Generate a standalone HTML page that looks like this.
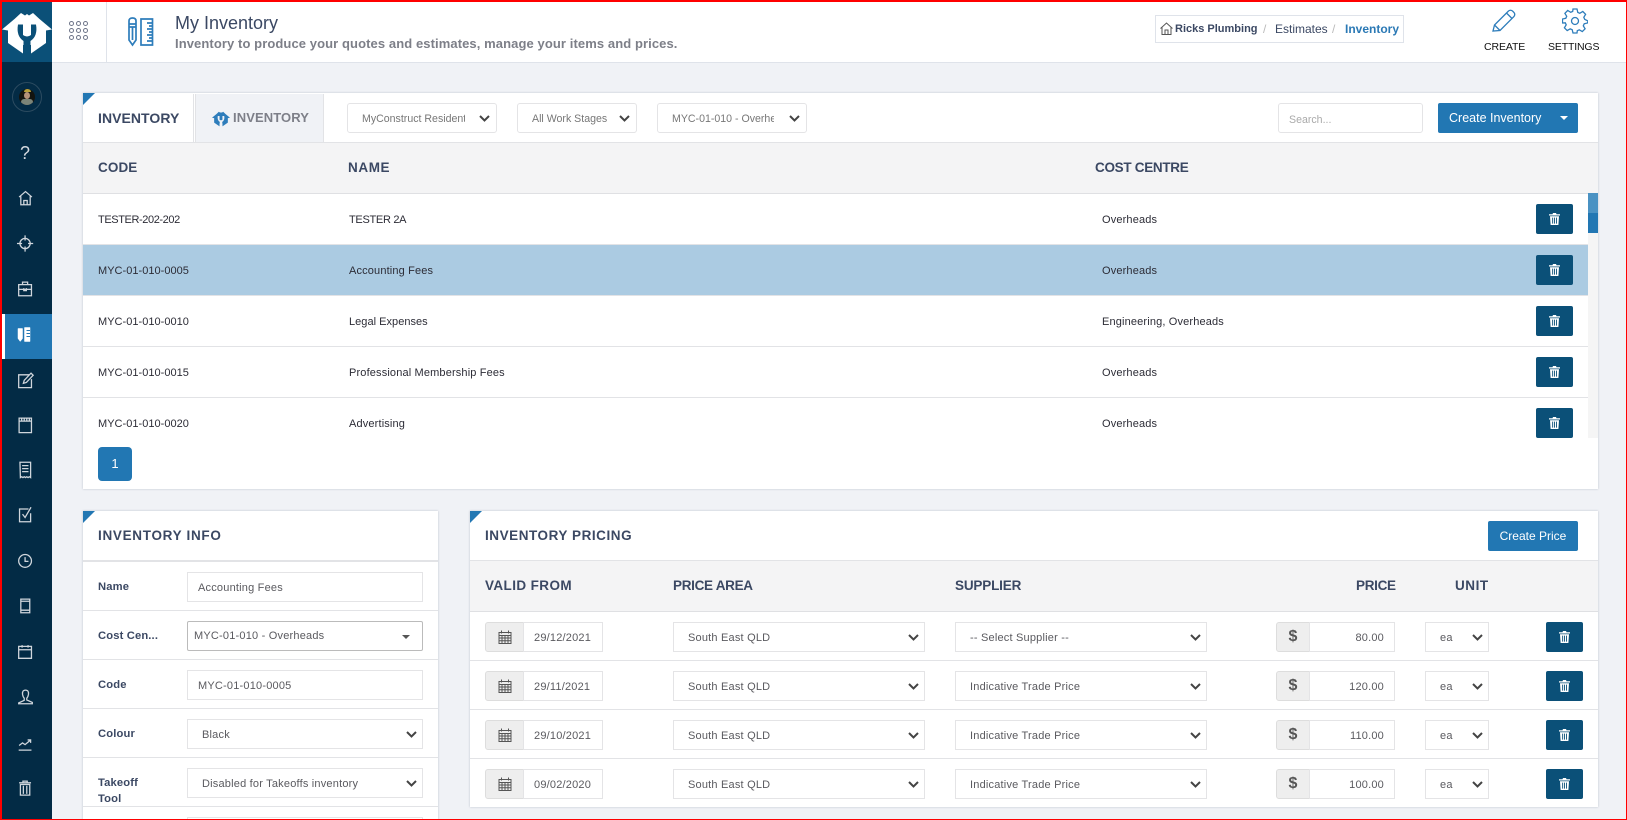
<!DOCTYPE html>
<html lang="en"><head><meta charset="utf-8"><title>My Inventory</title>
<style>
*{box-sizing:border-box}
html{margin:0;padding:0;width:1627px;height:820px;overflow:hidden}
body{margin:0;padding:0;width:1627px;height:820px;overflow:hidden;position:relative;background:#f0f2f6;font-family:"Liberation Sans",sans-serif;color:#333}
.a{position:absolute}
.t{position:absolute;white-space:nowrap;line-height:16px}
.h{font-weight:700;font-size:13.5px;color:#3b4863;letter-spacing:.3px}
.r{font-size:11px;color:#2c2c36;letter-spacing:.15px}
.l{font-size:11.2px;font-weight:700;color:#3b4863;letter-spacing:.15px}
.card{position:absolute;background:#fff;box-shadow:0 0 2px rgba(120,130,150,.45)}
.corner{position:absolute;left:0;top:0;width:0;height:0;border-top:12px solid #2277b3;border-right:12px solid transparent}
.line{position:absolute;background:#e2e3e6;height:1px}
.del{position:absolute;width:37px;height:30px;background:#0b5078;border-radius:2px}
.del svg{position:absolute;left:13px;top:9px;width:11px;height:12px}
.box{position:absolute;height:30px;background:#fff;border:1px solid #e4e4e6;font-size:11px;color:#5a5a5f;line-height:31px;white-space:nowrap;overflow:hidden;letter-spacing:.2px}
.chev{position:absolute;right:5px;top:11px;width:11px;height:7px}
.add{position:absolute;height:30px;background:#eee;border:1px solid #ddd;border-radius:3px 0 0 3px;color:#555;text-align:center}
.dol{font-size:16px;font-weight:700;line-height:28px}
.ic{position:absolute;left:14px;width:23px;height:23px;margin-top:2px;fill:none;stroke:#d0d6dc;stroke-width:1.5}
.btn{position:absolute;background:#2277b3;color:#fff;height:30px;border-radius:2px;font-size:12px;line-height:30px;text-align:center}
</style></head><body>
<svg width="0" height="0" style="position:absolute">
<symbol id="trash" viewBox="0 0 11 12"><path fill="#fff" d="M4 0h3l.5 1.200H11v1.300H0V1.200h3.500zM1 3.200h9l-.6 8.800H1.600zM3.200 4.600v6h.9v-6zm1.900 0v6H6v-6zm1.900 0v6h.9v-6z" fill-rule="evenodd"/></symbol>
<symbol id="chev" viewBox="0 0 11 7"><path d="M1 1l4.500 4.500L10 1" fill="none" stroke="#444" stroke-width="2"/></symbol>
<symbol id="cal" viewBox="0 0 14 14"><path fill="none" stroke="#555" d="M1 2.500h12v11H1zM1 5.500h12M1 8h12M1 10.800h12M4 5.500v8M7 5.500v8M10 5.500v8M3.500 .5v3M10.500 .5v3"/></symbol>
</svg>

<!-- header -->
<div class="a" style="left:0;top:0;width:1627px;height:63px;background:#fff;border-bottom:1px solid #dfe3ea"></div>
<div class="a" style="left:2px;top:2px;width:50px;height:60px;background:#0b5078"></div>
<svg class="a" style="left:2px;top:8px" width="50" height="50" viewBox="0 0 50 50"><path fill="#fff" d="M0 21.500L12.500 11 19 5l4 2.500L25 6l2 1.500L31 5l6.500 6L50 21.500l-6 1V35L29 45.500V37h-8v8.500L6 35V22.500z"/><path fill="#0b5078" d="M16 16.500H21V27Q25 30 29 27V16.500H34Q36 28 28.500 33V46H21.500V33Q14 28 16 16.500Z"/></svg>
<div class="a" style="left:2px;top:62px;width:50px;height:758px;background:#032b45"></div>
<div class="a" style="left:106px;top:2px;width:1px;height:60px;background:#dfe3ea"></div>
<svg class="a" style="left:68px;top:20px" width="22" height="22" viewBox="0 0 22 22" fill="none" stroke="#6d7488"><circle cx="3.500" cy="3.500" r="2"/><circle cx="10.500" cy="3.500" r="2"/><circle cx="17.500" cy="3.500" r="2"/><circle cx="3.500" cy="10.500" r="2"/><circle cx="10.500" cy="10.500" r="2"/><circle cx="17.500" cy="10.500" r="2"/><circle cx="3.500" cy="17.500" r="2"/><circle cx="10.500" cy="17.500" r="2"/><circle cx="17.500" cy="17.500" r="2"/></svg>
<svg class="a" style="left:128px;top:17px" width="26" height="30" viewBox="0 0 26 30" fill="none" stroke="#2e7dbb" stroke-width="1.700"><path d="M1 4q0-3 3.500-3T8 4v19l-3.500 5L1 23zM1 7h7M1 10h7M4.500 10v13"/><path d="M13 2h11.500v26H13zM19 6h5M21 9h3M19 12h5M21 15h3M19 18h5M21 21h3M19 24h5"/></svg>
<div class="t" style="left:175px;top:12px;font-size:18px;line-height:22px;color:#3b4863">My Inventory</div>
<div class="t" style="left:175px;top:36px;font-size:13px;font-weight:700;color:#7d7f88;letter-spacing:.09px">Inventory to produce your quotes and estimates, manage your items and prices.</div>

<div class="a" style="left:1155px;top:15px;width:249px;height:28px;border:1px solid #dfe3ea;background:#fff"></div>
<svg class="a" style="left:1160px;top:22px" width="13" height="13" viewBox="0 0 13 13" fill="none" stroke="#555"><path d="M.5 6.500L6.500 1l6 5.500M2 5.500V12.500h9V5.500M5 12.500V8h3v4.500"/></svg>
<div class="t" style="left:1175px;top:21px;font-size:11px;font-weight:700;color:#3b4863">Ricks Plumbing</div>
<div class="t" style="left:1263px;top:21px;font-size:12px;color:#bbb">/</div>
<div class="t" style="left:1275px;top:21px;font-size:12px;color:#3b4863">Estimates</div>
<div class="t" style="left:1332px;top:21px;font-size:12px;color:#bbb">/</div>
<div class="t" style="left:1345px;top:21px;font-size:12px;font-weight:700;color:#2b79b5">Inventory</div>

<svg class="a" style="left:1492px;top:9px" width="24" height="23" viewBox="0 0 24 23" fill="none" stroke="#2e7dbb" stroke-width="1.300"><path d="M1 22l1.500-6L16.500 2q2-1.500 4 0l1.500 1.500q1.500 2 0 4L8 21.500zM2.500 16L8 21.500M14.500 4l5.500 5.500"/></svg>
<svg class="a" style="left:1562px;top:8px" width="26" height="26" viewBox="0 0 26 26" fill="none" stroke="#2e7dbb" stroke-width="1.300"><circle cx="13" cy="13" r="3.500"/><path d="M11 1h4l.8 3.400 2 .9 3-1.800 2.800 2.800-1.800 3 .9 2L26 13l-.5 2-3.300.8-.9 2 1.800 3-2.800 2.800-3-1.800-2 .9L15 25h-4l-.8-3.300-2-.9-3 1.800-2.800-2.800 1.800-3-.9-2L.5 15v-4l3.300-.7.9-2-1.800-3L5.700 2.500l3 1.800 2-.9z"/></svg>
<div class="t" style="left:1484px;top:39px;font-size:10.500px;color:#111;letter-spacing:-.1px">CREATE</div>
<div class="t" style="left:1548px;top:39px;font-size:10.500px;color:#111;letter-spacing:-.15px">SETTINGS</div>

<!-- sidebar -->
<div class="a" style="left:12px;top:82px;width:30px;height:30px;border-radius:50%;border:1px solid #2c4b60"></div>
<div class="a" style="left:19px;top:89px;width:16px;height:16px;border-radius:50%;background:#14140f;overflow:hidden"><div class="a" style="left:5px;top:0;width:7px;height:3px;background:#b9a03a;border-radius:3px 3px 0 0"></div><div class="a" style="left:5px;top:3px;width:6px;height:7px;background:#b5927a;border-radius:50%"></div><div class="a" style="left:2px;top:10px;width:12px;height:6px;background:#7b8478;border-radius:3px"></div></div>
<div class="a" style="left:2px;top:314px;width:50px;height:45px;background:#2277b3"></div>
<div class="a" style="left:2px;top:314px;width:3px;height:45px;background:#fff"></div>
<div class="t" style="left:20px;top:143px;font-size:18px;line-height:20px;color:#d5dae0">?</div>
<svg class="ic" style="top:184px" viewBox="0 0 27 27"><path d="M6 13l7.500-6.500L21 13M8 12v10h11V12M11.500 22v-5h4v5"/></svg>
<svg class="ic" style="top:230px" viewBox="0 0 27 27"><circle cx="13" cy="13.500" r="6"/><path d="M13 4v6M13 17v6M3.500 13.500h6M16.500 13.500h6"/></svg>
<svg class="ic" style="top:275px" viewBox="0 0 27 27"><path d="M5.500 9h15v13h-15zM5.500 14.500h15M10 9V6h6v3M11.500 13v3h3v-3"/></svg>
<svg class="a" style="left:17px;top:327px" width="14" height="15" viewBox="0 0 26 30" fill="#fff" stroke="#fff"><path d="M1 3h9v20l-4.500 6L1 23z"/><path d="M14 1h11v28H14z"/><path stroke="#2277b3" stroke-width="2" d="M18 7h7M18 13h7M18 19h7"/></svg>
<svg class="ic" style="top:366px" viewBox="0 0 27 27"><path d="M18 8H5.500v15h15V13M11 18l1-3.500L20 6l2.500 2.500-8 8.500z"/></svg>
<svg class="ic" style="top:411px" viewBox="0 0 27 27"><path d="M6 6h14.500v17H6zM6 9.500h14.500M9 6v3M12 6v3M15 6v3M18 6v3"/></svg>
<svg class="ic" style="top:456px" viewBox="0 0 27 27"><path d="M7 5h12.500v18l-1.500-1-1.500 1-1.500-1-1.500 1-1.500-1-1.500 1-1.500-1-1.500 1zM9.500 9h7.500M9.500 12.500h7.500M9.500 16h7.500"/></svg>
<svg class="ic" style="top:501px" viewBox="0 0 27 27"><path d="M17 7H6.500v15h13V12M10 13l3 4 7-12"/></svg>
<svg class="ic" style="top:547px" viewBox="0 0 27 27"><circle cx="13" cy="14" r="7.500"/><path d="M13 9.500V14.500h4"/></svg>
<svg class="ic" style="top:592px" viewBox="0 0 27 27"><path d="M8 6h10.500v16H8zM8 19h10.500M8 8.500h10.500"/></svg>
<svg class="ic" style="top:638px" viewBox="0 0 27 27"><path d="M5.500 7.500h15v14h-15zM5.500 11.500h15M9.500 6v3M16.500 6v3"/></svg>
<svg class="ic" style="top:683px" viewBox="0 0 27 27"><path d="M13.500 6q4 0 3.500 5-.5 3-2 4.500v2l6.500 3v1.500H5.500V21l6.500-3v-2.500Q10.500 14 10 11q-.5-5 3.500-5z"/></svg>
<svg class="ic" style="top:729px" viewBox="0 0 27 27"><path d="M5.500 22.500h15M6 17l4-3 3 2 6-5M16 10.500h3.500V14"/></svg>
<svg class="ic" style="top:774px" viewBox="0 0 27 27"><path d="M6 8h14M10.500 8V6h5v2M7.500 10h11v12.500h-11zM11 11.500v9.500M15 11.500v9.500"/></svg>

<!-- top card -->
<div class="card" style="left:83px;top:93px;width:1515px;height:396px"></div>
<div class="a" style="left:83px;top:142px;width:1515px;height:52px;background:#f4f4f5;border-top:1px solid #e2e3e6;border-bottom:1px solid #dfe0e3"></div>
<div class="a" style="left:195px;top:94px;width:129px;height:48px;background:#f0f2f6;border-left:1px solid #e2e3e6;border-right:1px solid #e2e3e6"></div>
<div class="a" style="left:193px;top:94px;width:1px;height:48px;background:#e2e3e6"></div>
<div class="corner" style="left:83px;top:93px"></div>
<div class="t h" style="left:98px;top:110px;font-size:14px;letter-spacing:.05px">INVENTORY</div>
<svg class="a" style="left:212px;top:110px" width="18" height="18" viewBox="0 0 50 50"><path fill="#2e7dbb" d="M0 21.500L12.500 11 19 5l4 2.500L25 6l2 1.500L31 5l6.500 6L50 21.500l-6 1V35L29 45.500V37h-8v8.500L6 35V22.500z"/><path fill="#f0f2f6" d="M16 16.500H21V27Q25 30 29 27V16.500H34Q36 28 28.500 33V46H21.500V33Q14 28 16 16.500Z"/></svg>
<div class="t h" style="left:233px;top:110px;font-size:13px;color:#7d7f88;letter-spacing:.1px">INVENTORY</div>

<div class="box" style="left:347px;top:103px;width:150px;border-radius:3px;padding-left:14px;font-size:10.600px;letter-spacing:0;color:#777"><div style="width:103px;overflow:hidden">MyConstruct Residential</div><svg class="chev" style="right:6px"><use href="#chev"/></svg></div>
<div class="box" style="left:517px;top:103px;width:120px;border-radius:3px;padding-left:14px;font-size:10.600px;letter-spacing:0;color:#777">All Work Stages<svg class="chev" style="right:6px"><use href="#chev"/></svg></div>
<div class="box" style="left:657px;top:103px;width:150px;border-radius:3px;padding-left:14px;font-size:10.600px;letter-spacing:0;color:#777"><div style="width:102px;overflow:hidden">MYC-01-010 - Overheads</div><svg class="chev" style="right:6px"><use href="#chev"/></svg></div>
<div class="box" style="left:1278px;top:103px;width:145px;border-radius:3px;padding-left:10px;font-size:10.600px;letter-spacing:0;color:#aaa;line-height:32px">Search...</div>
<div class="btn" style="left:1438px;top:103px;width:140px;text-align:left;padding-left:11px;font-size:12.500px">Create Inventory</div>
<div class="a" style="left:1560px;top:116px;width:0;height:0;border-left:4px solid transparent;border-right:4px solid transparent;border-top:4px solid #fff"></div>

<div class="t h" style="left:98px;top:160px;letter-spacing:.1px">CODE</div>
<div class="t h" style="left:348px;top:160px;letter-spacing:.6px">NAME</div>
<div class="t h" style="left:1095px;top:160px;letter-spacing:-.3px">COST CENTRE</div>

<div class="a" style="left:83px;top:245px;width:1505px;height:51px;background:#abcbe2"></div>
<div class="line" style="left:83px;top:244px;width:1505px"></div>
<div class="line" style="left:83px;top:295px;width:1505px"></div>
<div class="line" style="left:83px;top:346px;width:1505px"></div>
<div class="line" style="left:83px;top:397px;width:1505px"></div>
<div class="a" style="left:1588px;top:193px;width:10px;height:245px;background:#f5f5f5"></div>
<div class="a" style="left:1588px;top:193px;width:10px;height:20px;background:#4a92c3"></div>
<div class="a" style="left:1588px;top:213px;width:10px;height:20px;background:#2277b3"></div>

<div class="t r" style="left:98px;top:212px;letter-spacing:-.4px">TESTER-202-202</div><div class="t r" style="left:349px;top:212px;letter-spacing:-.3px">TESTER 2A</div><div class="t r" style="left:1102px;top:212px">Overheads</div>
<div class="t r" style="left:98px;top:263px;letter-spacing:.03px">MYC-01-010-0005</div><div class="t r" style="left:349px;top:263px">Accounting Fees</div><div class="t r" style="left:1102px;top:263px">Overheads</div>
<div class="t r" style="left:98px;top:314px;letter-spacing:.03px">MYC-01-010-0010</div><div class="t r" style="left:349px;top:314px;letter-spacing:.03px">Legal Expenses</div><div class="t r" style="left:1102px;top:314px">Engineering, Overheads</div>
<div class="t r" style="left:98px;top:365px;letter-spacing:.03px">MYC-01-010-0015</div><div class="t r" style="left:349px;top:365px">Professional Membership Fees</div><div class="t r" style="left:1102px;top:365px">Overheads</div>
<div class="t r" style="left:98px;top:416px;letter-spacing:.03px">MYC-01-010-0020</div><div class="t r" style="left:349px;top:416px">Advertising</div><div class="t r" style="left:1102px;top:416px">Overheads</div>

<div class="del" style="left:1536px;top:204px"><svg><use href="#trash"/></svg></div>
<div class="del" style="left:1536px;top:255px"><svg><use href="#trash"/></svg></div>
<div class="del" style="left:1536px;top:306px"><svg><use href="#trash"/></svg></div>
<div class="del" style="left:1536px;top:357px"><svg><use href="#trash"/></svg></div>
<div class="del" style="left:1536px;top:408px"><svg><use href="#trash"/></svg></div>

<div class="btn" style="left:98px;top:447px;width:34px;height:34px;line-height:33px;border-radius:4px;font-size:13px">1</div>

<!-- info card -->
<div class="card" style="left:83px;top:511px;width:355px;height:320px"></div>
<div class="corner" style="left:83px;top:511px"></div>
<div class="t h" style="left:98px;top:528px;letter-spacing:.7px">INVENTORY INFO</div>
<div class="a" style="left:83px;top:560px;width:355px;height:2px;background:#e2e3e6"></div>
<div class="line" style="left:83px;top:610px;width:355px"></div>
<div class="line" style="left:83px;top:659px;width:355px"></div>
<div class="line" style="left:83px;top:708px;width:355px"></div>
<div class="line" style="left:83px;top:757px;width:355px"></div>
<div class="line" style="left:83px;top:806px;width:355px"></div>
<div class="t l" style="left:98px;top:579px">Name</div>
<div class="t l" style="left:98px;top:628px">Cost Cen...</div>
<div class="t l" style="left:98px;top:677px">Code</div>
<div class="t l" style="left:98px;top:726px">Colour</div>
<div class="t l" style="left:98px;top:775px">Takeoff</div>
<div class="t l" style="left:98px;top:791px">Tool</div>
<div class="box" style="left:187px;top:572px;width:236px;padding-left:10px">Accounting Fees</div>
<div class="box" style="left:187px;top:621px;width:236px;padding-left:6px;border-color:#bbb;border-radius:2px;line-height:29px">MYC-01-010 - Overheads<div class="a" style="right:12px;top:13px;width:0;height:0;border-left:4px solid transparent;border-right:4px solid transparent;border-top:4px solid #555"></div></div>
<div class="box" style="left:187px;top:670px;width:236px;padding-left:10px">MYC-01-010-0005</div>
<div class="box" style="left:187px;top:719px;width:236px;padding-left:14px">Black<svg class="chev"><use href="#chev"/></svg></div>
<div class="box" style="left:187px;top:768px;width:236px;padding-left:14px">Disabled for Takeoffs inventory<svg class="chev"><use href="#chev"/></svg></div>
<div class="box" style="left:187px;top:817px;width:236px"></div>

<!-- pricing card -->
<div class="card" style="left:470px;top:511px;width:1128px;height:296px"></div>
<div class="corner" style="left:470px;top:511px"></div>
<div class="t h" style="left:485px;top:528px;letter-spacing:.55px">INVENTORY PRICING</div>
<div class="btn" style="left:1488px;top:521px;width:90px">Create Price</div>
<div class="a" style="left:470px;top:560px;width:1128px;height:52px;background:#f4f4f5;border-top:1px solid #e2e3e6;border-bottom:1px solid #dfe0e3"></div>
<div class="t h" style="left:485px;top:578px;letter-spacing:.4px">VALID FROM</div>
<div class="t h" style="left:673px;top:578px;letter-spacing:-.3px">PRICE AREA</div>
<div class="t h" style="left:955px;top:578px;letter-spacing:-.17px">SUPPLIER</div>
<div class="t h" style="left:1356px;top:578px;letter-spacing:-.3px">PRICE</div>
<div class="t h" style="left:1455px;top:578px;letter-spacing:.55px">UNIT</div>
<div class="line" style="left:470px;top:660px;width:1128px"></div>
<div class="line" style="left:470px;top:709px;width:1128px"></div>
<div class="line" style="left:470px;top:758px;width:1128px"></div>

<!-- row 1 -->
<div class="add" style="left:485px;top:622px;width:39px"><svg class="a" style="left:12px;top:7px" width="14" height="14"><use href="#cal"/></svg></div>
<div class="box" style="left:523px;top:622px;width:80px;padding-left:10px">29/12/2021</div>
<div class="box" style="left:673px;top:622px;width:252px;padding-left:14px">South East QLD<svg class="chev"><use href="#chev"/></svg></div>
<div class="box" style="left:955px;top:622px;width:252px;padding-left:14px">-- Select Supplier --<svg class="chev"><use href="#chev"/></svg></div>
<div class="add dol" style="left:1276px;top:622px;width:34px">$</div>
<div class="box" style="left:1309px;top:622px;width:86px;text-align:right;padding-right:10px">80.00</div>
<div class="box" style="left:1425px;top:622px;width:64px;padding-left:14px">ea<svg class="chev"><use href="#chev"/></svg></div>
<div class="del" style="left:1546px;top:622px"><svg><use href="#trash"/></svg></div>
<!-- row 2 -->
<div class="add" style="left:485px;top:671px;width:39px"><svg class="a" style="left:12px;top:7px" width="14" height="14"><use href="#cal"/></svg></div>
<div class="box" style="left:523px;top:671px;width:80px;padding-left:10px">29/11/2021</div>
<div class="box" style="left:673px;top:671px;width:252px;padding-left:14px">South East QLD<svg class="chev"><use href="#chev"/></svg></div>
<div class="box" style="left:955px;top:671px;width:252px;padding-left:14px">Indicative Trade Price<svg class="chev"><use href="#chev"/></svg></div>
<div class="add dol" style="left:1276px;top:671px;width:34px">$</div>
<div class="box" style="left:1309px;top:671px;width:86px;text-align:right;padding-right:10px">120.00</div>
<div class="box" style="left:1425px;top:671px;width:64px;padding-left:14px">ea<svg class="chev"><use href="#chev"/></svg></div>
<div class="del" style="left:1546px;top:671px"><svg><use href="#trash"/></svg></div>
<!-- row 3 -->
<div class="add" style="left:485px;top:720px;width:39px"><svg class="a" style="left:12px;top:7px" width="14" height="14"><use href="#cal"/></svg></div>
<div class="box" style="left:523px;top:720px;width:80px;padding-left:10px">29/10/2021</div>
<div class="box" style="left:673px;top:720px;width:252px;padding-left:14px">South East QLD<svg class="chev"><use href="#chev"/></svg></div>
<div class="box" style="left:955px;top:720px;width:252px;padding-left:14px">Indicative Trade Price<svg class="chev"><use href="#chev"/></svg></div>
<div class="add dol" style="left:1276px;top:720px;width:34px">$</div>
<div class="box" style="left:1309px;top:720px;width:86px;text-align:right;padding-right:10px">110.00</div>
<div class="box" style="left:1425px;top:720px;width:64px;padding-left:14px">ea<svg class="chev"><use href="#chev"/></svg></div>
<div class="del" style="left:1546px;top:720px"><svg><use href="#trash"/></svg></div>
<!-- row 4 -->
<div class="add" style="left:485px;top:769px;width:39px"><svg class="a" style="left:12px;top:7px" width="14" height="14"><use href="#cal"/></svg></div>
<div class="box" style="left:523px;top:769px;width:80px;padding-left:10px">09/02/2020</div>
<div class="box" style="left:673px;top:769px;width:252px;padding-left:14px">South East QLD<svg class="chev"><use href="#chev"/></svg></div>
<div class="box" style="left:955px;top:769px;width:252px;padding-left:14px">Indicative Trade Price<svg class="chev"><use href="#chev"/></svg></div>
<div class="add dol" style="left:1276px;top:769px;width:34px">$</div>
<div class="box" style="left:1309px;top:769px;width:86px;text-align:right;padding-right:10px">100.00</div>
<div class="box" style="left:1425px;top:769px;width:64px;padding-left:14px">ea<svg class="chev"><use href="#chev"/></svg></div>
<div class="del" style="left:1546px;top:769px"><svg><use href="#trash"/></svg></div>

<!-- red frame -->
<div class="a" style="left:0;top:0;width:1627px;height:820px;border:solid #f00;border-width:2px 1px 1px 2px;pointer-events:none"></div>
</body></html>
